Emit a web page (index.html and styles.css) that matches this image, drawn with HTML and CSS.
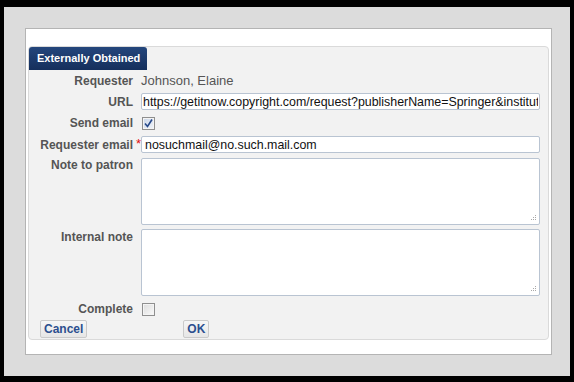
FILE: index.html
```html
<!DOCTYPE html>
<html lang="en">
<head>
    <meta charset="UTF-8">
    <title>Externally Obtained</title>
    <link rel="stylesheet" href="styles.css">
</head>
<body>
    <div class="frame">
        <div class="panel">
            <div class="box">
                <div class="tab">Externally Obtained</div>
                <form class="fields">
                    <div class="row row-req">
                        <label class="lbl">Requester</label>
                        <span class="value">Johnson, Elaine</span>
                    </div>
                    <div class="row row-url">
                        <label class="lbl" for="url">URL</label>
                        <input class="txt" id="url" type="text" value="https://getitnow.copyright.com/request?publisherName=Springer&amp;institution=Test">
                    </div>
                    <div class="row row-send">
                        <label class="lbl">Send email</label>
                        <span class="check checked">
                            <svg width="9" height="9" viewBox="0 0 9 9"><path d="M1 4.5 L3.5 7.5 L8 0.5" fill="none" stroke="#27498a" stroke-width="1.6"/></svg>
                        </span>
                    </div>
                    <div class="row row-mail">
                        <label class="lbl" for="mail">Requester email<span class="req">*</span></label>
                        <input class="txt" id="mail" type="text" value="nosuchmail@no.such.mail.com">
                    </div>
                    <div class="row row-note">
                        <label class="lbl top" for="note">Note to patron</label>
                        <div class="area-wrap"><textarea class="area" id="note"></textarea></div>
                    </div>
                    <div class="row row-internal">
                        <label class="lbl top internal" for="internal">Internal note</label>
                        <div class="area-wrap"><textarea class="area" id="internal"></textarea></div>
                    </div>
                    <div class="row row-complete">
                        <label class="lbl">Complete</label>
                        <span class="check"></span>
                    </div>
                    <div class="buttons">
                        <button type="button" class="btn">Cancel</button>
                        <button type="button" class="btn btn-ok">OK</button>
                    </div>
                </form>
            </div>
        </div>
    </div>
</body>
</html>
```
FILE: styles.css
```css
html, body {
    margin: 0;
    padding: 0;
}
body {
    background-color: #000;
    padding: 7px 4px 6px 4px;
    font-family: 'Liberation Sans', Arial, sans-serif;
    width: 574px;
    height: 382px;
    box-sizing: border-box;
}
.frame {
    background-color: #dcdcdc;
    height: 369px;
    padding: 21px 18px 0 21px;
    box-sizing: border-box;
}
.panel {
    background-color: #fff;
    border: 1px solid #b4b4b4;
    height: 327px;
    box-sizing: border-box;
    padding: 17px 2px 0 2px;
}
.box {
    background-color: #f2f2f2;
    border: 1px solid #dadada;
    border-radius: 4px;
    height: 294px;
    box-sizing: border-box;
}
.tab {
    display: inline-block;
    height: 23px;
    line-height: 23px;
    padding: 0 7px 0 8px;
    background: linear-gradient(#24467c, #152f5c);
    color: #fff;
    font-size: 11px;
    font-weight: bold;
    border-radius: 3px 3px 0 0;
    vertical-align: top;
}
.fields {
    margin: 0;
}
.row {
    display: grid;
    grid-template-columns: 112px 399px;
    align-items: center;
}
.lbl {
    position: relative;
    text-align: right;
    padding-right: 8px;
    font-size: 12px;
    font-weight: bold;
    color: #555;
    line-height: 14px;
}
.lbl.top {
    align-self: start;
}
.lbl.internal {
    padding-top: 1px;
}
.req {
    position: absolute;
    right: 0;
    top: -1px;
    color: #e01010;
    font-weight: normal;
    font-size: 13px;
}
.value {
    font-size: 13px;
    color: #555;
    line-height: 14px;
}
.row-req { height: 18px; margin-top: 2px; }
.row-url { margin-top: 3px; }
.row-send { margin-top: 6px; }
.row-mail { margin-top: 6px; }
.row-note { margin-top: 5px; }
.row-internal { margin-top: 4px; }
.row-complete { margin-top: 6px; }

.txt {
    width: 399px;
    height: 17px;
    box-sizing: border-box;
    border: 1px solid #b9c4d2;
    border-radius: 2px;
    background: #fff;
    font-family: 'Liberation Sans', Arial, sans-serif;
    font-size: 12.4px;
    color: #111;
    padding: 0 1px;
    margin: 0;
    outline: none;
}
#mail {
    padding-left: 3px;
}
.area-wrap {
    position: relative;
    width: 399px;
    height: 67px;
}
.area {
    display: block;
    width: 399px;
    height: 67px;
    box-sizing: border-box;
    border: 1px solid #b9c4d2;
    border-radius: 2px;
    background: #fff;
    resize: none;
    margin: 0;
    outline: none;
}
/* точки уголка для изменения размера */
.area-wrap::after {
    content: "";
    position: absolute;
    right: 4px;
    bottom: 4px;
    width: 6px;
    height: 6px;
    background:
        linear-gradient(#a9a9a9, #a9a9a9) 5px 0 / 1px 1px no-repeat,
        linear-gradient(#a9a9a9, #a9a9a9) 3px 2px / 1px 1px no-repeat,
        linear-gradient(#a9a9a9, #a9a9a9) 5px 2px / 1px 1px no-repeat,
        linear-gradient(#a9a9a9, #a9a9a9) 1px 4px / 1px 1px no-repeat,
        linear-gradient(#a9a9a9, #a9a9a9) 3px 4px / 1px 1px no-repeat,
        linear-gradient(#a9a9a9, #a9a9a9) 5px 4px / 1px 1px no-repeat;
}
.check {
    display: flex;
    align-items: center;
    justify-content: center;
    width: 13px;
    height: 13px;
    box-sizing: border-box;
    margin-left: 1px;
    border: 1px solid #8f8f8f;
    background: linear-gradient(135deg, #dcdcdc, #fafafa);
    box-shadow: inset 0 0 0 1px #f4f4f4;
}
.check.checked {
    background: linear-gradient(135deg, #c9d5e8, #f2f5fa);
}
.buttons {
    display: flex;
    margin-top: 4px;
    padding-left: 11px;
}
.btn {
    height: 18px;
    padding: 0 3px;
    border: 1px solid #cacaca;
    border-radius: 2px;
    background: linear-gradient(#f6f6f6, #e6e6e6);
    color: #2c4f8f;
    font-family: 'Liberation Sans', Arial, sans-serif;
    font-size: 12px;
    font-weight: bold;
    line-height: 16px;
    cursor: pointer;
}
.btn-ok {
    margin-left: 96px;
}
```
